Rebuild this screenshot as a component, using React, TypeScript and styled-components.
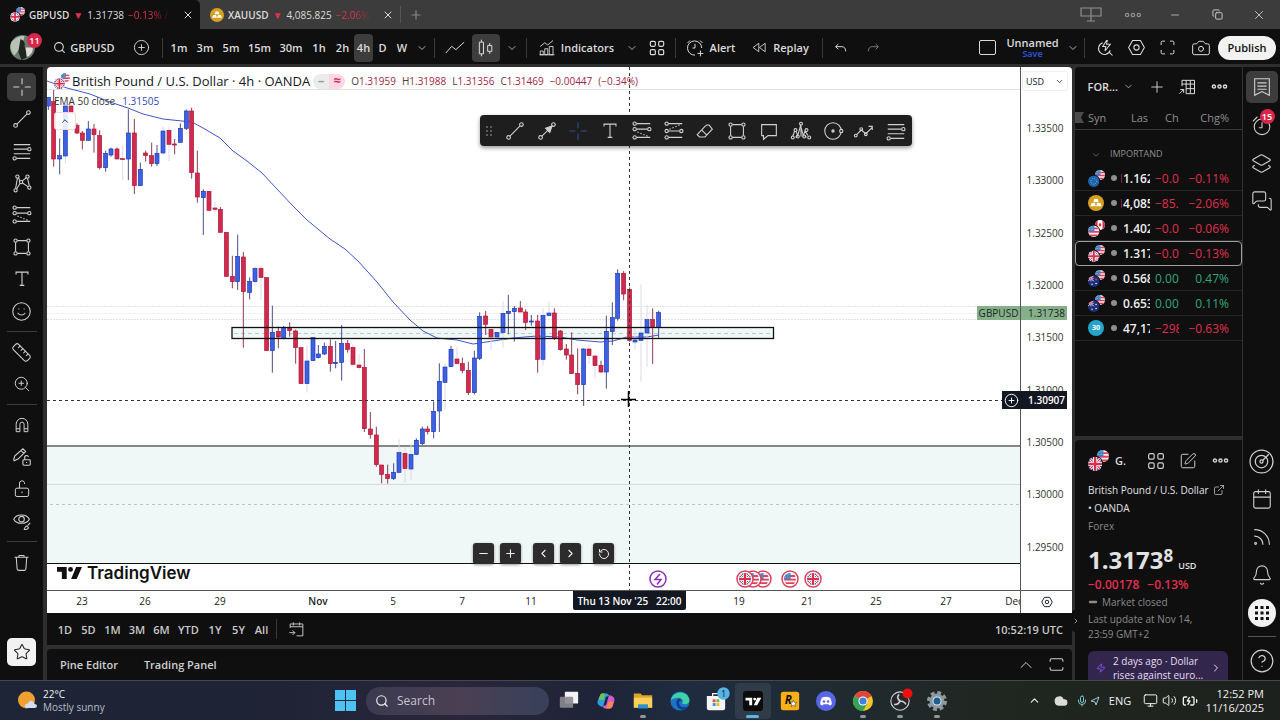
import React from "react";
import styled, { createGlobalStyle, css } from "styled-components";
import {
  Bell, Calendar, Camera, ChevronDown, ChevronLeft, ChevronRight, ChevronUp, CircleHelp, CirclePlus, Copy,
  ExternalLink, Layers2, Maximize, MessagesSquare, Minus, Plus, RotateCcw, Ruler, Search, Smile, SquarePen,
  Star, X, ZoomIn, Rss, Cloud, Volume2, BatteryCharging, Monitor, Mic, Zap,
} from "lucide-react";

const Global = createGlobalStyle`
  *, *::before, *::after { box-sizing: border-box; }
  body { margin: 0; background: #2e2e2e; color: #dbdbdb; font-family: "Open Sans", "Noto Sans", sans-serif; font-size: 11px; }
  button, input { font: inherit; color: inherit; }
  button { background: none; border: 0; padding: 0; margin: 0; display: inline-flex; align-items: center; justify-content: center; white-space: nowrap; }
  svg { display: block; flex: none; }
  a { color: inherit; text-decoration: none; }
`;

const RED = "#e0304e";
const PANEL = "#0f0f0f";

/* ---------- line icons ---------- */

const shapes = {
  cross: <path d="M12 2.500V9M12 15v6.500M2.500 12H9M15 12h6.500" />,
  trend: <><circle cx="5" cy="19" r="2" /><circle cx="19" cy="5" r="2" /><path d="M6.500 17.500 17.500 6.500" /></>,
  arrow: <><circle cx="5" cy="19" r="2" /><circle cx="19" cy="5" r="2" /><path d="M6.500 17.500 13 11" /><path d="m17.500 6.500-2.500 7-4.500-4.500z" fill="currentColor" /></>,
  fib: <><path d="M3 5h18M3 10h15M3 15h18M6 20h15" /><circle cx="20" cy="10" r="1.800" /><circle cx="4" cy="20" r="1.800" /></>,
  pattern: <><circle cx="5" cy="20" r="1.800" /><circle cx="7" cy="5" r="1.800" /><circle cx="11" cy="11" r="1.800" /><circle cx="18" cy="5" r="1.800" /><circle cx="20" cy="17" r="1.800" /><path d="M5 18 7 7M8 6l2 4M12 10l5-4M18 7l2 8M12.500 12l6 4M9.800 12.500 6 18.500" /></>,
  forecast: <><path d="M6 4h15M6 10h12M6 19h15" /><path d="m7 13 12 5" strokeDasharray="1.500 2" /><circle cx="4" cy="4" r="1.800" /><circle cx="4" cy="10" r="1.800" /><circle cx="20" cy="10" r="1.800" /><circle cx="4" cy="19" r="1.800" /></>,
  position: <><path d="M6 4h15M6 12h12M6 19h15" /><path d="m7 10 12-5" strokeDasharray="1.500 2" /><circle cx="4" cy="4" r="1.800" /><circle cx="4" cy="12" r="1.800" /><circle cx="20" cy="12" r="1.800" /><circle cx="4" cy="19" r="1.800" /></>,
  rect: <><path d="M7 5h10M7 19h10M5 7v10M19 7v10" /><circle cx="5" cy="5" r="1.800" /><circle cx="19" cy="5" r="1.800" /><circle cx="5" cy="19" r="1.800" /><circle cx="19" cy="19" r="1.800" /></>,
  text: <path d="M5.500 7V4.500h13V7M12 4.500V19M9.500 19h5" />,
  magnet: <path d="M5 20v-9a7 7 0 0 1 14 0v9h-4.500v-9a2.500 2.500 0 0 0-5 0v9zM5 16.500h4.500M14.500 16.500H19" />,
  pencilLock: <><path d="m3 15 1-4L13 3l3 3-8 8-4.500 2zM11 5l3 3" /><rect x="13" y="15" width="8" height="6" rx="1" /><path d="M15 15v-2a2 2 0 0 1 4-1M17 17.500v1" /></>,
  lock: <><rect x="4" y="11" width="16" height="10" rx="2" /><path d="M9 11V6a3 3 0 0 1 6-1.500V6M12 15v2" /></>,
  eye: <><path d="M3 10c3-6 14-6 17 0-3 6-14 6-17 0z" /><circle cx="11.500" cy="10" r="3" /><path d="M14 21c1 0 1-3 3-3.500L19 19c0 2-3 2.500-5 2zM18 17l3-3" /></>,
  trash: <path d="M4 6h16M9 6V4.500Q9 4 9.500 4h5q.5 0 .5.500V6M6 6l1 13.500q.100 1.500 1.500 1.500h7q1.400 0 1.500-1.500L18 6" />,
  eraser: <path d="m3.500 16 8.500-9 2-1.500h2.500L20 10l-8 8.500H6zM8.500 11l5.500 5.500" />,
  comment: <path d="M4 5h16v12h-9l-5 4v-4H4z" />,
  elliott: <><path d="m3 18 2-6M6.500 12l2 5 3-11 3 11 2-5 3 5M12 6v12M8 17l-2 2M16 17l2 2" /><circle cx="3" cy="19" r="1.600" /><circle cx="6" cy="11" r="1.600" /><circle cx="12" cy="4" r="1.600" /><circle cx="8.500" cy="18" r="1.600" /><circle cx="15.500" cy="18" r="1.600" /><circle cx="18" cy="11" r="1.600" /><circle cx="21" cy="19" r="1.600" /></>,
  circle: <><circle cx="12" cy="12" r="9" /><circle cx="12" cy="12" r="1.200" fill="currentColor" /><circle cx="21" cy="12" r="1.800" fill="#1e1e1e" /></>,
  path: <><path d="m4 16 5-5 5 4 7-7M17 7h4v4" /><circle cx="3" cy="17" r="1.500" /><circle cx="9" cy="10" r="1.500" /><circle cx="14" cy="15.500" r="1.500" /></>,
  lineChart: <path d="m1 18 7-8 5 4 10-9" />,
  candles: <path d="M4 5h5v14H4zM6.500 2v3M6.500 19v3M14 9h5v7h-5zM16.500 6v3M16.500 16v3" />,
  indicators: <path d="m3 10 6-5 4 3 7-6M3 21v-5h4v5zM9 21v-8h4v8zM15 21V10h5v11zM2 21h20" />,
  grid: <><rect x="4" y="4" width="6" height="6" rx="1.500" /><rect x="14" y="4" width="6" height="6" rx="1.500" /><rect x="4" y="14" width="6" height="6" rx="1.500" /><rect x="14" y="14" width="6" height="6" rx="1.500" /></>,
  alarm: <><path d="M20 12a8.500 8.500 0 1 0-8 8.500M12 7v5H9M3 6l3-3M18 3l3 3M18.500 15v7M15 18.500h7" /></>,
  clock: <><circle cx="12" cy="14" r="8.500" /><path d="M12 9v6H8.500M2 8l5-5" /></>,
  replay: <path d="M11 6v12l-8-6zM20 6v12l-8-6z" />,
  undo: <path d="m8 6-4 4 4 4M4 10h9q6 0 6 7" />,
  redo: <path d="m16 6 4 4-4 4M20 10h-9q-6 0-6 7" />,
  hex: <><path d="M7.500 4h9l4.500 8-4.500 8h-9L3 12z" /><circle cx="12" cy="12" r="3" /></>,
  quick: <><path d="M9 5a8 8 0 1 0 10 10M17.500 17.500 22 22M14 2l-5 8h4l-1 6 7-9h-5l1-5z" /></>,
  dots: <><circle cx="5" cy="12" r="2" /><circle cx="12" cy="12" r="2" /><circle cx="19" cy="12" r="2" /></>,
  layout: <path d="M2 5h20v8H2zM12 5v13M8 18h8" />,
  table: <path d="M6 11V4h15v16H11M6 8.500h15M11 4v16M16 4v16M11 14h10M3 20l5-5M4 15h4v4" />,
  bookmark: <path d="M4 3h16v18l-8-4-8 4zM7 7.500h10M7 11h10M7 14.500h10" />,
  radar: <><circle cx="12" cy="12" r="11" /><circle cx="12" cy="12" r="6" /><circle cx="12" cy="12" r="1.500" /><path d="m13 11 6-6" /></>,
  goto: <path d="M4 10V5h16v15h-8M4 8.500h16M8 3v4M16 3v4M3 16h7M7 13l3 3-3 3" />,
  expand: <path d="M3 8V6q0-2 2-2h14q2 0 2 2v2M3 16v2q0 2 2 2h14q2 0 2-2v-2" />,
};

const Icon = ({ name, size = 22, w = 1.2 }: { name: keyof typeof shapes; size?: number; w?: number }) => (
  <svg width={size} height={size} viewBox="0 0 24 24" fill="none" stroke="currentColor" strokeWidth={w} aria-hidden>
    {shapes[name]}
  </svg>
);

/* ---------- flags ---------- */

type FlagKind = "gb" | "us" | "eu" | "ca" | "nz" | "au";

const FlagArt = ({ kind }: { kind: FlagKind }) => {
  if (kind === "us")
    return <><rect width="20" height="20" fill="#f3f1f4" /><path d="M0 5h20M0 11h20M0 17h20" stroke="#df4258" strokeWidth="3" /><path d="M0 0h11v10H0z" fill="#3b84c9" /><path d="M2 3h7M2 7h7" stroke="#fff" strokeDasharray="1 2" /></>;
  if (kind === "eu")
    return <><rect width="20" height="20" fill="#1b64b0" /><circle cx="10" cy="10" r="5" fill="none" stroke="#c9cf78" strokeWidth="1.500" strokeDasharray="1.500 2.400" /></>;
  if (kind === "ca")
    return <><rect width="20" height="20" fill="#fff" /><path d="M0 0h5v20H0zM15 0h5v20h-5zM10 5l3 5-3 4-3-4z" fill="#d8273f" /></>;
  if (kind === "gb")
    return <><rect width="20" height="20" fill="#31428e" /><path d="m0 0 20 20M20 0 0 20" stroke="#fff" strokeWidth="4" /><path d="m0 0 20 20M20 0 0 20" stroke="#d8304a" strokeWidth="1.500" /><path d="M10 0v20M0 10h20" stroke="#fff" strokeWidth="6" /><path d="M10 0v20M0 10h20" stroke="#d8304a" strokeWidth="3.500" /></>;
  return <><rect width="20" height="20" fill="#1d2f7c" /><path d="m0 0 10 10M10 0 0 10M0 5h10M5 0v10" stroke="#fff" strokeWidth="1.500" /><path d="M5 0v10M0 5h10" stroke="#d8304a" /><circle cx="14" cy="7" r="1.300" fill={kind === "nz" ? "#e35a66" : "#fff"} /><circle cx="14" cy="14" r="1.300" fill="#fff" /><circle cx="7" cy="15" r="1.300" fill="#fff" /></>;
};

const Pair = ({ front, back, size = 17, ring = PANEL }: { front: FlagKind; back: FlagKind; size?: number; ring?: string }) => {
  const id = React.useId();
  return (
    <svg width={size} height={size} viewBox="0 0 34 34" aria-hidden>
      <clipPath id={id}><circle cx="10" cy="10" r="10" /></clipPath>
      <g transform="translate(14 0)"><g clipPath={`url(#${id})`}><FlagArt kind={back} /></g></g>
      <circle cx="11.500" cy="22.500" r="13" fill={ring} />
      <g transform="translate(0 11) scale(1.150)"><g clipPath={`url(#${id})`}><FlagArt kind={front} /></g></g>
    </svg>
  );
};

const Gold = ({ size = 16 }: { size?: number }) => (
  <svg width={size} height={size} viewBox="0 0 20 20" aria-hidden>
    <circle cx="10" cy="10" r="10" fill="#d5a021" />
    <path d="M8 5h4l1.500 4h-7zM4.500 10h4L10 14H3zM11.500 10h4l1.500 4h-7z" fill="#fff" />
  </svg>
);

const Dow = () => (
  <svg width="16" height="16" viewBox="0 0 20 20" aria-hidden>
    <circle cx="10" cy="10" r="10" fill="#25a5cb" />
    <text x="10" y="13" fontSize="9" fontWeight="700" textAnchor="middle" fill="#fff">30</text>
  </svg>
);

/* ---------- title bar ---------- */

const Page = styled.div`display: flex; flex-direction: column; min-height: 100vh;`;

const TitleBar = styled.header`display: flex; height: 29px; background: #3c3c3c; align-items: stretch;`;

const Tab = styled.div<{ $active?: boolean; $w: number }>`
  display: flex; align-items: center; gap: 4px; width: ${(p) => p.$w}px; padding-left: 10px; font-size: 10px;
  ${(p) => p.$active && css`background: ${PANEL}; border-radius: 0 5px 0 0;`}
  button { margin-left: auto; width: 24px; }
`;
const Strong = styled.span`font-weight: 600;`;
const Down = styled.span`color: ${RED};`;
const Fade = styled.span`
  color: ${RED}; white-space: nowrap; overflow: hidden; flex: 1;
  mask-image: linear-gradient(90deg, #000 50%, transparent);
`;
const NewTab = styled.button`&& { width: 30px; color: #8a8a8a; border-left: 1px solid #555; margin: 6px 0; }`;
const Spacer = styled.div`flex: 1;`;
const WindowButtons = styled.div`
  display: flex;
  button { width: 42px; color: #d0d0d0; }
  button.dim { color: #8f8f8f; }
`;

/* ---------- top toolbar ---------- */

const Toolbar = styled.div`display: flex; align-items: center; height: 35px; background: ${PANEL}; padding: 2px 4px 0 0;`;
const Slot = styled.button<{ $w: number; $on?: boolean; $dim?: boolean }>`
  width: ${(p) => p.$w}px; height: 28px; gap: 5px; font-weight: 600; font-size: 11px; border-radius: 4px;
  ${(p) => p.$on && css`background: #3d3d3d;`}
  ${(p) => p.$dim && css`color: #777;`}
`;
const SymbolSearch = styled(Slot)`gap: 4px;`;
const Divider = styled.i`width: 1px; height: 20px; background: #3a3a3a; margin: 0 3px;`;
const Avatar = styled.button`position: relative; width: 45px; height: 30px;`;
const Badge = styled.span`
  position: absolute; top: 0; right: 3px; min-width: 15px; height: 15px; line-height: 15px; border-radius: 8px;
  background: #d9254a; color: #fff; font-size: 9px; font-weight: 600; text-align: center;
`;
const Named = styled.button`&& { flex-direction: column; width: 63px; font-weight: 600; font-size: 11px; line-height: 12px; } small { color: #2f55e0; font-size: 9px; line-height: 9px; font-weight: 600; }`;
const Publish = styled.button`height: 24px; width: 58px; border-radius: 12px; background: #f2f2f2; color: #111; font-size: 11px; font-weight: 600;`;

/* ---------- body ---------- */

const Body = styled.div`display: flex; flex: 1; margin-top: 3px; min-height: 613px;`;
const LeftRail = styled.nav`
  display: flex; flex-direction: column; align-items: center; width: 43px; margin-right: 4px; background: ${PANEL}; padding: 4px 0 14px;
  hr { width: 30px; height: 1px; margin: 4px 0; border: 0; background: #3d3d3d; }
`;
const RailTool = styled.button<{ $on?: boolean; $light?: boolean }>`
  width: 29px; height: 28px; margin: 2px 0; border-radius: 5px; color: #cfcfcf;
  ${(p) => p.$on && css`background: #3d3d3d;`}
  ${(p) => p.$light && css`background: #f2f2f2; color: #222; margin: auto 0 0;`}
`;
const Centre = styled.main`display: flex; flex-direction: column; flex: 1; min-width: 0; gap: 4px; margin-right: 3px;`;
const ChartCard = styled.section`display: flex; flex-direction: column; flex: 1; border-radius: 4px 4px 0 0; overflow: hidden; background: #fff; color: #131722;`;
const PlotRow = styled.div`display: flex; flex: 1; border-bottom: 1px solid #555;`;
const Plot = styled.div`position: relative; flex: 1; overflow: hidden; > svg { width: 100%; height: 100%; position: absolute; inset: 0; }`;
const PriceAxis = styled.div`position: relative; width: 52px; border-left: 1px solid #555; > svg { width: 100%; height: 100%; }`;
const Currency = styled.button`
  && { position: absolute; top: 4px; left: 1px; width: 46px; height: 20px; border: 1px solid #eee; border-radius: 3px; justify-content: space-between; padding: 0 3px; font-size: 9px; }
`;
const TimeRow = styled.div`display: flex; height: 22px;`;
const TimeScale = styled.div`position: relative; flex: 1; overflow: hidden; > svg { width: 100%; height: 100%; }`;
const TimeSettings = styled.button`&& { width: 52px; border-left: 1px solid #555; }`;
const CursorTime = styled.div`
  position: absolute; left: 526px; top: -1px; height: 20px; width: 113px; background: #131722; color: #fff;
  font-size: 10px; font-weight: 600; line-height: 23px; text-align: center; white-space: pre; border-radius: 0 0 2px 2px;
`;
const CursorPrice = styled.div`
  position: absolute; right: 5px; top: 324px; display: flex; align-items: center; gap: 9px; width: 65px; height: 18px; background: #131722;
  color: #fff; font-size: 10px; font-weight: 600; padding-left: 2px; z-index: 2;
`;
const LastPrice = styled.div`
  position: absolute; right: 5px; top: 239px; display: grid; grid-template-columns: 43px 1fr; width: 90px; height: 14px; line-height: 14px;
  background: #86b08a; color: #1b2a1e; font-size: 10px; text-align: center;
  span + span { border-left: 1px solid #555; padding-left: 5px; }
`;
const Legend = styled.div`position: absolute; top: 5px; left: 7px; display: flex; align-items: center; font-size: 13px; white-space: pre;`;
const LegendTitle = styled.span`margin: 0 3px 0 2px;`;
const Pill = styled.span`
  display: inline-flex; width: 32px; height: 15px; border-radius: 8px; overflow: hidden; margin-right: 6px; font-size: 13px; line-height: 13px;
  i { flex: 1; text-align: center; font-style: normal; background: #ebebeb; color: #999; font-weight: 700; }
  i + i { background: #fbd7e4; color: #d42b62; }
`;
const Ohlc = styled.span`font-size: 10px; color: #444; display: inline-flex; gap: 6px; b { font-weight: 400; color: #a01f45; }`;
const Study = styled.div`position: absolute; top: 27px; left: 7px; font-size: 10px; color: #333; display: flex; gap: 7px; b { font-weight: 400; color: #3349b8; }`;
const Collapse = styled.button`&& { position: absolute; top: 45px; left: 7px; width: 22px; height: 18px; background: #ffffffe0; border: 1px solid #f0dada; border-radius: 3px; }`;
const Floating = styled.div`
  position: absolute; top: 48px; left: 433px; display: flex; align-items: center; height: 31px; width: 432px; padding-left: 5px;
  background: #1e1e1e; color: #d0d0d0; border-radius: 4px; box-shadow: 0 2px 4px #0006;
  button { flex: 1; height: 28px; }
  button.on { color: #2f4f9f; }
`;
const Grip = styled.i`width: 8px; height: 12px; margin-right: 6px; background: radial-gradient(circle at 2px 2px, #5c5c5c 1px, transparent 1px) 0 0 / 4px 4px;`;
const NavButtons = styled.div`
  position: absolute; bottom: 26px; left: 426px; display: flex; gap: 6px; color: #eee;
  button { width: 21px; height: 21px; background: #2c2c2c; border-radius: 3px; box-shadow: 0 1px 3px #0006; }
  button:nth-child(3), button:nth-child(5) { margin-left: 6px; }
`;
const Brand = styled.a`position: absolute; left: 10px; bottom: 5px; display: flex; align-items: center; gap: 5px; color: #111; font: 600 17px/24px Inter, sans-serif;`;

const RangeBar = styled.div`
  display: flex; align-items: center; height: 32px; background: ${PANEL}; margin-top: -4px; padding: 0 9px 0 6px; color: #c9c9c9; font-weight: 600; font-size: 11px;
`;
const Range = styled.button<{ $w: number }>`width: ${(p) => p.$w}px; height: 26px;`;
const DockBar = styled.div`
  display: flex; align-items: center; height: 31px; background: ${PANEL}; border-radius: 4px 4px 0 0; padding: 0 1px 0 0; font-size: 11px; font-weight: 600; color: #d0d0d0;
`;
const DockTab = styled.button`&& { padding: 0 13px; }`;
const DockButton = styled.button`width: 30px; height: 28px;`;

/* ---------- right side ---------- */

const Side = styled.aside`display: flex; flex-direction: column; width: 168px; border-right: 1px solid #333; gap: 4px;`;
const Watch = styled.section`flex: 1; background: ${PANEL}; border-radius: 4px 0 0 0; overflow: hidden;`;
const SideHead = styled.div`display: flex; align-items: center; height: 39px; padding-left: 12px;`;
const Table = styled.table`
  width: 100%; table-layout: fixed; border-spacing: 0; font-size: 12px;
  th { height: 24px; padding: 0; font-weight: 400; font-size: 11px; color: #8e8e8e; text-align: left; border-bottom: 1px solid #3a3a3a; }
  td { height: 25px; padding: 0; border-bottom: 1px solid #262626; }
  th:last-child, td:last-child { text-align: right; padding-right: 13px; }
`;
const SymHead = styled.div`
  display: flex; align-items: center; gap: 4px; overflow: hidden;
`;
const GroupCell = styled.td`&&& { height: 36px; padding: 11px 0 0 16px; text-align: left; border: 0; color: #8e8e8e; font-size: 9px; } svg { display: inline; vertical-align: middle; margin-right: 9px; }`;
const Row = styled.tr<{ $on?: boolean }>`${(p) => p.$on && css`outline: 1px solid #a0a0a0; outline-offset: -1px; border-radius: 4px;`}`;
const Sym = styled.div`
  display: flex; align-items: center; justify-content: space-between; padding: 0 3px 0 13px;
  &::after { content: ""; width: 6px; height: 6px; border-radius: 3px; background: #8e8e8e; }
`;
const Clip = styled.div<{ $w: number; $x?: number }>`width: ${(p) => p.$w}px; margin-left: ${(p) => p.$x ?? 0}px; overflow: hidden; white-space: nowrap;`;
const Last = styled(Clip)<{ $tick?: boolean }>`
  font-weight: 600; color: #eee;
  ${(p) => p.$tick && css`background: linear-gradient(#7d2637, #7d2637) 0 50% / 1px 9px no-repeat;`}
  padding-left: 2px;
`;
const Move = styled.span<{ $up?: boolean }>`color: ${(p) => (p.$up ? "#2fa87c" : RED)};`;

const Details = styled.section`flex: 0 0 240px; height: 240px; background: ${PANEL}; overflow: hidden; padding-left: 13px; border-radius: 4px 0 0 0;`;
const DetailHead = styled.div`
  display: flex; align-items: center; height: 41px; font-weight: 600; padding-right: 6px;
  b { margin-left: 6px; font-weight: 600; }
  button { width: 32px; color: #cfcfcf; }
  button:first-of-type { margin-left: auto; }
`;
const Line = styled.p<{ $dim?: boolean; $h?: number }>`
  display: flex; align-items: center; gap: 4px; margin: 0; height: ${(p) => p.$h ?? 18}px; font-size: 10px; white-space: nowrap;
  ${(p) => (p.$dim ? css`color: #8a8a8a;` : css`color: #e2e2e2; font-weight: 500;`)}
`;
const Price = styled.div`
  display: flex; align-items: baseline; height: 32px; margin-top: 9px; font-size: 24px; line-height: 32px; font-weight: 700; color: #e2e2e2;
  sup { font-size: 17px; line-height: 1; align-self: flex-start; margin-top: 3px; }
  small { font-size: 9px; margin-left: 5px; font-weight: 600; }
`;
const Change = styled.div`height: 17px; line-height: 17px; font-size: 12px; font-weight: 600; color: ${RED}; display: flex; gap: 8px;`;
const News = styled.a`
  display: flex; align-items: center; gap: 7px; width: 140px; margin-top: 10px; padding: 3px 8px; background: #33264d; border-radius: 6px 6px 0 0; color: #e4dff0; font-size: 10px; line-height: 14px;
  span { flex: 1; white-space: nowrap; font-weight: 500; }
`;

const IconRail = styled.nav`
  position: relative; display: flex; flex-direction: column; align-items: center; width: 37px; background: ${PANEL}; padding: 4px 0 3px; color: #cfcfcf;
  hr { width: 28px; height: 1px; border: 0; margin: 5px 0 8px; background: #555; }
`;
const RailButton = styled.button<{ $on?: boolean }>`
  && { position: relative; width: 32px; height: 32px; margin-bottom: 6px; border-radius: 5px; }
  &&:last-child { margin-bottom: 0; }
  ${(p) => p.$on && css`background: #3d3d3d;`}
`;
const AppsButton = styled.button`&& { width: 28px; height: 28px; margin: 2px 0 4px; border-radius: 14px; background: #f2f2f2; color: #111; }`;
const SideHandle = styled.button`&& { position: absolute; left: -171px; top: 543px; width: 7px; height: 22px; background: ${PANEL}; border-radius: 3px; }`;

/* ---------- taskbar ---------- */

const Taskbar = styled.footer`
  display: flex; align-items: center; height: 40px; border-top: 1px solid #45484c; color: #f0f0f0;
  background: linear-gradient(90deg, #1e2536 0, #1e2335 20%, #2a263b 36%, #1e2437 47%, #1f2c40 54%, #202b30 66%, #202620 78%, #1d211d 100%);
`;
const Weather = styled.div`display: flex; align-items: center; gap: 5px; width: 335px; padding-left: 17px; font-size: 10px; line-height: 13px; small { display: block; font-size: 10px; color: #b8bdc9; }`;
const SearchBox = styled.label`
  display: flex; align-items: center; gap: 8px; width: 183px; height: 28px; margin-left: 10px; padding: 0 9px; border-radius: 14px; background: linear-gradient(90deg, #3b3a50, #4a3f52 50%, #38405a);
  input { width: 120px; border: 0; background: none; outline: 0; font-size: 12px; padding: 0; }
  input::placeholder { color: #c5c5cf; opacity: 1; }
`;
const Apps = styled.div`display: grid; grid-template-columns: repeat(11, 1fr); width: 404px; margin-left: 2px;`;
const AppButton = styled.button<{ $run?: boolean; $on?: boolean }>`
  position: relative; height: 36px; border-radius: 4px;
  ${(p) => p.$on && css`background: #ffffff14;`}
  ${(p) => (p.$run || p.$on) && css`&::after { content: ""; position: absolute; bottom: 1px; width: ${p.$on ? 13 : 6}px; height: 3px; border-radius: 2px; background: ${p.$on ? "#5fb4e6" : "#92969c"}; }`}
`;
const Tray = styled.div`display: flex; align-items: center; margin-left: auto; padding-right: 16px; font-size: 11px;`;
const TraySlot = styled.button<{ $w: number }>`&& { width: ${(p) => p.$w}px; height: 30px; justify-content: space-evenly; }`;
const Clock = styled.time`width: 62px; text-align: right; line-height: 14px; font-size: 11px; white-space: nowrap;`;

/* ---------- chart data ---------- */

/* Bars: x, body top, body bottom, high, low, then "b" (up) or "r" (down); "f" marks a faint wick. Three units per pixel. */
type Bar = [number, number, number, number, number, string];
const segments: { x: number; y: number; bars: Bar[] }[] = [
  {
    x: 0, y: 60,
    bars: [
      [145, 112, 138, 112, 150, "b"], [161, 125, 297, 90, 320, "r"], [179, 287, 297, 235, 343, "b"], [196, 138, 288, 130, 310, "bf"],
      [213, 138, 160, 120, 200, "rf"], [231, 197, 219, 190, 222, "r"], [247, 219, 241, 213, 268, "r"], [265, 207, 241, 183, 241, "b"],
      [282, 207, 224, 192, 278, "r"], [299, 227, 323, 211, 328, "r"], [317, 280, 323, 272, 335, "b"], [333, 267, 285, 263, 290, "b"],
      [351, 267, 297, 263, 297, "r"], [368, 296, 298, 255, 360, "rf"], [385, 219, 297, 148, 360, "b"], [403, 219, 377, 177, 402, "r"],
      [421, 328, 377, 308, 377, "b"], [437, 279, 287, 272, 305, "r"], [455, 287, 311, 248, 320, "r"], [471, 280, 311, 255, 318, "b"],
      [489, 213, 279, 200, 285, "bf"], [507, 211, 253, 200, 303, "rf"], [524, 252, 255, 237, 283, "r"], [541, 205, 247, 190, 247, "b"],
      [559, 153, 205, 149, 210, "b"], [575, 153, 338, 143, 356, "r"], [592, 339, 411, 272, 428, "r"], [610, 394, 413, 388, 525, "b"],
      [627, 394, 451, 394, 451, "r"], [645, 444, 448, 425, 460, "rf"], [661, 448, 517, 441, 517, "r"], [679, 517, 649, 517, 649, "r"],
      [697, 649, 665, 587, 685, "r"], [713, 589, 665, 524, 690, "b"], [730, 591, 695, 576, 863, "r"], [749, 664, 697, 652, 718, "b"],
      [765, 625, 665, 618, 678, "bf"], [783, 625, 653, 618, 720, "rf"], [800, 653, 872, 653, 872, "r"],
    ],
  },
  {
    x: 230, y: 260,
    bars: [
      [127, 217, 272, 137, 338, "b"], [145, 214, 231, 200, 265, "r"], [161, 203, 235, 198, 238, "b"], [179, 204, 212, 187, 230, "r"],
      [197, 213, 263, 209, 311, "r"], [213, 263, 371, 263, 371, "r"], [231, 303, 371, 255, 398, "bf"], [249, 233, 302, 233, 302, "b"],
      [265, 282, 293, 255, 295, "b"], [283, 259, 282, 248, 285, "b"], [301, 259, 311, 238, 335, "r"], [317, 307, 311, 243, 325, "b"],
      [335, 250, 307, 195, 362, "b"], [353, 250, 268, 240, 278, "r"], [369, 262, 313, 253, 320, "rf"], [387, 315, 323, 282, 330, "rf"],
      [403, 322, 506, 267, 516, "r"], [421, 507, 524, 456, 536, "r"], [439, 525, 614, 500, 620, "r"], [455, 615, 643, 615, 670, "r"],
      [473, 643, 656, 614, 671, "r"], [491, 637, 656, 610, 660, "b"], [507, 578, 637, 538, 640, "bf"], [525, 580, 626, 560, 668, "rf"],
      [543, 583, 627, 550, 660, "bf"], [559, 541, 583, 535, 585, "b"], [577, 507, 551, 500, 555, "b"], [593, 507, 515, 498, 523, "r"],
      [611, 454, 515, 424, 535, "b"], [628, 364, 453, 310, 516, "b"], [645, 321, 367, 312, 450, "bf"], [663, 268, 320, 258, 320, "b"],
      [681, 297, 311, 260, 311, "rf"], [697, 311, 331, 293, 340, "r"], [715, 331, 398, 305, 405, "r"], [733, 294, 398, 272, 403, "b"],
      [749, 169, 295, 157, 300, "b"], [767, 168, 193, 153, 225, "r"], [783, 208, 231, 200, 270, "rf"], [801, 217, 231, 217, 231, "b"],
      [819, 160, 218, 125, 263, "bf"],
    ],
  },
  {
    x: 460, y: 250,
    bars: [
      [145, 184, 191, 135, 253, "b"], [163, 175, 185, 168, 275, "b"], [181, 174, 186, 153, 186, "r"], [197, 186, 217, 178, 240, "r"],
      [214, 213, 216, 195, 227, "b"], [233, 213, 328, 195, 368, "r"], [249, 196, 328, 175, 348, "bf"], [267, 189, 197, 155, 200, "bf"],
      [283, 189, 266, 175, 270, "r"], [301, 243, 299, 240, 302, "r"], [319, 297, 315, 282, 329, "r"], [335, 315, 371, 247, 371, "r"],
      [353, 370, 404, 295, 433, "r"], [371, 297, 404, 295, 468, "b"], [387, 297, 317, 285, 342, "rf"], [405, 318, 347, 318, 385, "rf"],
      [423, 346, 366, 332, 368, "r"], [439, 244, 366, 197, 416, "b"], [457, 203, 245, 157, 285, "b"], [473, 70, 205, 58, 212, "b"],
      [491, 70, 132, 63, 151, "r"], [509, 118, 271, 112, 275, "r"], [525, 270, 276, 235, 298, "bf"], [543, 249, 271, 103, 395, "bf"],
      [561, 209, 249, 165, 350, "bf"], [578, 209, 232, 175, 342, "r"], [596, 188, 232, 182, 265, "b"],
    ],
  },
];

const ema = "47,81 67,88 90,94 110,102 128,108 143,114 163,119 182,121 192,122 203,128 220,138 233,151 247,161 262,173 277,189 293,206 307,220 330,239 345,249 358,261 377,282 393,302 410,320 423,331 437,338 457,340 473,344 493,341 513,338 537,336 560,337 577,340 600,342 613,341 627,337 647,337 659,335";

const prices = ["1.33500", "1.33000", "1.32500", "1.32000", "1.31500", "1.31000", "1.30500", "1.30000", "1.29500"];
const dates: [number, string][] = [[35, "23"], [98, "26"], [173, "29"], [271, "Nov"], [346, "5"], [415, "7"], [484, "11"], [692, "19"], [760, "21"], [829, "25"], [899, "27"], [967, "Dec"]];
const events: [number, FlagKind][] = [[763, "us"], [753, "us"], [745, "gb"], [790, "us"], [813, "gb"]];

const Chart = () => (
  <svg aria-label="GBPUSD 4h candles">
    <g transform="translate(-47 -67)" shapeRendering="crispEdges">
      <rect x="47" y="446" width="100%" height="117" fill="#eff8f6" />
      <g stroke="#e2e2e4">
        <path d="M47 89.500h4000" /><path d="M47 306.500h4000M47 319.500h4000" strokeDasharray="2 1" />
        <path d="M47 313.500h4000" stroke="#f1f1f3" /><path d="M47 484.500h4000" stroke="#d3dbda" />
      </g>
      <path d="M50 504.500h4000" stroke="#bcc5c3" strokeDasharray="3 3" />
      <path d="M47 446h4000" stroke="#858787" strokeWidth="2" />
      <path d="M47 563.500h4000" stroke="#111" />
      <rect x="232" y="327.500" width="541" height="11" fill="#eff8f6" />
      <path d="M234 333.500h538" stroke="#b9cdc9" strokeDasharray="4 3" />
    </g>
    <g transform="translate(-47 -67)">
      <polyline points={ema} fill="none" stroke="#4056c4" />
      {segments.map((s) => (
        <g key={s.x} transform={`translate(${s.x} ${s.y}) scale(0.33333)`}>
          {s.bars.map(([x, top, bottom, high, low, kind]) => {
            const up = kind[0] === "b";
            const wick = kind[1] === "f" ? "#dcd9e4" : up ? "#4a4c8c" : "#8e3a55";
            return (
              <g key={x}>
                <path d={`M${x} ${high}V${low}`} stroke={wick} strokeWidth="3" />
                <rect x={x - 6} y={top} width="12" height={Math.max(3, bottom - top)} fill={up ? "#3c62e2" : "#d22a4c"} stroke={up ? "#2036b4" : "#a81a3c"} strokeWidth="2" />
              </g>
            );
          })}
        </g>
      ))}
      <rect x="232" y="327.500" width="541.500" height="11" fill="none" stroke="#111" strokeWidth="1.300" />
      <g stroke="#333" strokeDasharray="3 3" shapeRendering="crispEdges">
        <path d="M47 400.500h4000" /><path d="M629.500 67V590" />
      </g>
      <path d="M621 399.500h15M628.500 391v16" stroke="#000" strokeWidth="1.500" />
      <circle cx="658" cy="579" r="8" fill="#fff" stroke="#8a2fb0" strokeWidth="1.500" />
      <path d="m660 574-5 5.500h6l-4 5" fill="none" stroke="#8a2fb0" strokeWidth="1.500" />
      <clipPath id="event"><circle cx="10" cy="10" r="10" /></clipPath>
      {events.map(([x, kind]) => (
        <g key={x}>
          <circle cx={x} cy="579" r="8" fill="#fff" stroke="#d8405c" strokeWidth="1.500" />
          <g transform={`translate(${x - 6} 573) scale(0.600)`}><g clipPath="url(#event)"><FlagArt kind={kind} /></g></g>
        </g>
      ))}
    </g>
  </svg>
);

const intervals: [string, number][] = [["1m", 26], ["3m", 26], ["5m", 26], ["15m", 31], ["30m", 32], ["1h", 24], ["2h", 23]];
const leftTools: (keyof typeof shapes)[] = ["trend", "fib", "pattern", "forecast", "rect", "text"];
const floatingTools: (keyof typeof shapes)[] = ["trend", "arrow", "cross", "text", "forecast", "position", "eraser", "rect", "comment", "elliott", "circle", "path", "fib"];
const ranges: [string, number][] = [["1D", 24], ["5D", 23], ["1M", 25], ["3M", 24], ["6M", 25], ["YTD", 29], ["1Y", 24], ["5Y", 23], ["All", 23]];

const watch: { icon: React.ReactNode; last: string; ch: string; pct: string; up?: boolean; on?: boolean; tick?: boolean }[] = [
  { icon: <Pair front="eu" back="us" />, last: "1.162", ch: "−0.00", pct: "−0.11%", tick: true },
  { icon: <Gold />, last: "4,085", ch: "−85.1", pct: "−2.06%", tick: true },
  { icon: <Pair front="us" back="ca" />, last: "1.402", ch: "−0.00", pct: "−0.06%" },
  { icon: <Pair front="gb" back="us" />, last: "1.317", ch: "−0.00", pct: "−0.13%", on: true },
  { icon: <Pair front="nz" back="us" />, last: "0.568", ch: "0.001", pct: "0.47%", up: true },
  { icon: <Pair front="au" back="us" />, last: "0.653", ch: "0.00", pct: "0.11%", up: true },
  { icon: <Dow />, last: "47,17", ch: "−298", pct: "−0.63%" },
];

const TvMark = ({ width, color }: { width: number; color: string }) => (
  <svg width={width} viewBox="0 0 36 18" fill={color} aria-hidden><path d="M0 0h14v18H7V7H0zM28 18h-8L27.500 0H36z" /><circle cx="19.500" cy="3.500" r="3.500" /></svg>
);

/* ---------- taskbar app art ---------- */

const art: { name: string; run?: boolean; on?: boolean; svg: React.ReactNode }[] = [
  { name: "Task view", svg: <><rect x="7" y="1" width="16" height="14" rx="1" fill="#f2f2f2" /><rect x="1" y="7" width="16" height="13" rx="1" fill="#8b8b8f" opacity=".9" /></> },
  { name: "Copilot", svg: <><path d="M7 3h6q2 0 3 3l-4 1-3 10q-1 3-4 1-4-2-3-6L5 5q.500-2 2-2z" fill="#2b9fe0" /><path d="M3 10 5 5q.500-2 2-2h4L9 11z" fill="#6cc45a" /><path d="M17 21h-6q-2 0-3-3l4-1 3-10q1-3 4-1 4 2 3 6l-2 7q-1 2-3 2z" fill="#d45ad0" /><path d="M21 13 19 19q-1 2-2 2h-5l3-8z" fill="#f58a4b" /></> },
  { name: "Files", run: true, svg: <><path d="M1 3h8l2 2h12v15H1z" fill="#e0a526" /><path d="M1 8h22v12H1z" fill="#fbd05a" /><path d="M6 16h12v5H6z" fill="#2b8fd0" /></> },
  { name: "Edge", svg: <><circle cx="12" cy="12" r="11.500" fill="#1b74c8" /><path d="M1 11C3 0 20-2 23.300 10c.5 6-5 7-9 5 3-3 0-7-4-7-4 0-8 1-9.300 3z" fill="#3fd0a8" /><path d="M10 9c-4 3-3 11 3 13 3 1 6 0 8-3-6 2-10-1-10-5 0-2 0-2 3-2-1-2-2-3-4-3z" fill="#103f8a" /></> },
  { name: "Store", svg: <><path d="M1 6h22v14q0 3-3 3H4q-3 0-3-3z" fill="#f4f4f4" /><path d="M8 6V3h8v3" fill="none" stroke="#f4f4f4" strokeWidth="1.500" /><path d="M8 10h3.500v3.500H8z" fill="#e8502f" /><path d="M12.500 10H16v3.500h-3.500z" fill="#7cb52b" /><path d="M8 14.500h3.500V18H8z" fill="#2a9fe0" /><path d="M12.500 14.500H16V18h-3.500z" fill="#f3b71e" /><circle cx="21" cy="3" r="7.500" fill="#55b4e4" /><text x="21" y="7" fontSize="11" textAnchor="middle" fill="#123">1</text></> },
  { name: "TradingView", on: true, svg: <><rect width="24" height="24" rx="4" fill="#0c0c0c" /><path d="M3 8h8v9H7.500v-5.500H3zM17 17h-4l4-9h5z" fill="#fff" /><circle cx="14" cy="9.700" r="1.700" fill="#fff" /></> },
  { name: "Rockstar", svg: <><rect x="1" y="1" width="22" height="22" rx="3" fill="#fcb017" /><text x="10" y="15" fontSize="14" fontWeight="700" fontStyle="italic" textAnchor="middle" fill="#111">R</text><path d="m16 11 1 2.500 3 .2-2 2 .5 3-2.500-1.500-2.500 1.500.5-3-2-2 3-.2z" fill="#fff" stroke="#222" strokeWidth=".6" /></> },
  { name: "Discord", svg: <><circle cx="12" cy="12" r="12" fill="#5865e8" /><path d="M7 8q5-2 10 0 2 4 2 8-1 1-3 1.500l-1-1.500H9l-1 1.500Q6 17 5 16q0-4 2-8z" fill="#fff" /><circle cx="9.500" cy="12.500" r="1.500" fill="#5865e8" /><circle cx="14.500" cy="12.500" r="1.500" fill="#5865e8" /></> },
  { name: "Chrome", run: true, svg: <><circle cx="12" cy="12" r="12" fill="#f5c52c" /><path d="M12 12 1.600 6a12 12 0 0 1 20.800 0z" fill="#e0453a" /><path d="M12 12 1.600 6A12 12 0 0 0 12 24l5-9z" fill="#35a257" /><circle cx="12" cy="12" r="5.500" fill="#fff" /><circle cx="12" cy="12" r="4.300" fill="#3f7fe6" /></> },
  { name: "OBS", run: true, svg: <><circle cx="12" cy="12" r="11" fill="#25272a" stroke="#d0d0d0" strokeWidth="1.300" /><path d="M11 4q-4 4 1 8M12 12q5 0 7 4M12 12q-2 5-7 4" fill="none" stroke="#d0d0d0" strokeWidth="2" /><circle cx="21" cy="3" r="6" fill="#f00f0f" /></> },
  { name: "Settings", run: true, svg: <><circle cx="12" cy="12" r="9" fill="#8f979f" /><circle cx="12" cy="12" r="10" fill="none" stroke="#8f979f" strokeWidth="4" strokeDasharray="4.600 3.250" /><circle cx="12" cy="12" r="5.500" fill="#cfe6f5" /><circle cx="12" cy="12" r="4.200" fill="#1d5f8f" /></> },
];

export default function App() {
  return (
    <Page>
      <Global />
      <TitleBar>
        <Tab $active $w={200}>
          <Pair front="gb" back="us" size={15} /><Strong>GBPUSD</Strong><Down>▼</Down><span>1.31738</span><Fade>−0.13% / U</Fade>
          <button aria-label="Close tab"><X size={12} /></button>
        </Tab>
        <Tab $w={200}>
          <Gold size={14} /><Strong>XAUUSD</Strong><Down>▼</Down><span>4,085.825</span><Fade>−2.06%</Fade>
          <button aria-label="Close tab"><X size={12} /></button>
        </Tab>
        <NewTab aria-label="New tab"><Plus size={14} /></NewTab>
        <Spacer />
        <WindowButtons>
          <button className="dim" aria-label="Layout"><Icon name="layout" size={24} /></button>
          <button className="dim" aria-label="More"><Icon name="dots" size={20} w={1.5} /></button>
          <button aria-label="Minimise"><Minus size={12} strokeWidth={1.5} /></button>
          <button aria-label="Restore"><Copy size={11} strokeWidth={2} /></button>
          <button aria-label="Close"><X size={14} strokeWidth={1.5} /></button>
        </WindowButtons>
      </TitleBar>

      <Toolbar>
        <Avatar aria-label="Account">
          <svg width="25" height="25" viewBox="0 0 24 24"><circle cx="12" cy="12" r="12" fill="#6a7a6c" /><path d="M2 6q6-6 12-5l-2 9-8 10Q-2 12 2 6z" fill="#b9c2b6" /><path d="M10 4q5 1 4 7l3 10-6 3-3-8z" fill="#1f2622" /><path d="M15 12h7q0 7-6 9z" fill="#e2ded6" /></svg>
          <Badge>11</Badge>
        </Avatar>
        <SymbolSearch $w={78}><Search size={13} />GBPUSD</SymbolSearch>
        <Slot $w={36} aria-label="Compare"><CirclePlus size={17} strokeWidth={1.3} /></Slot>
        <Divider />
        {intervals.map(([label, w]) => <Slot key={label} $w={w}>{label}</Slot>)}
        <Slot $w={19} $on>4h</Slot>
        <Slot $w={19}>D</Slot>
        <Slot $w={20}>W</Slot>
        <Slot $w={19} aria-label="Intervals"><ChevronDown size={12} strokeWidth={1.5} /></Slot>
        <Divider />
        <Slot $w={34} aria-label="Line"><Icon name="lineChart" size={20} /></Slot>
        <Slot $w={28} $on aria-label="Candles"><Icon name="candles" size={20} /></Slot>
        <Slot $w={23} aria-label="Chart types"><ChevronDown size={12} strokeWidth={1.5} /></Slot>
        <Divider />
        <Slot $w={92}><Icon name="indicators" size={18} />Indicators</Slot>
        <Slot $w={19} aria-label="Favourites"><ChevronDown size={12} strokeWidth={1.5} /></Slot>
        <Slot $w={31} aria-label="Templates"><Icon name="grid" size={20} w={1.4} /></Slot>
        <Divider />
        <Slot $w={62}><Icon name="alarm" size={20} />Alert</Slot>
        <Slot $w={78}><Icon name="replay" size={17} />Replay</Slot>
        <Divider />
        <Slot $w={30} aria-label="Undo"><Icon name="undo" size={16} w={1.5} /></Slot>
        <Slot $w={34} $dim aria-label="Redo"><Icon name="redo" size={16} w={1.5} /></Slot>
        <Spacer />
        <Slot $w={28} aria-label="Layout"><svg width="17" height="15" viewBox="0 0 17 15" fill="none" stroke="currentColor"><rect x=".5" y=".5" width="16" height="14" rx="1.500" /></svg></Slot>
        <Named>Unnamed<small>Save</small></Named>
        <Slot $w={17} aria-label="Layouts"><ChevronDown size={12} strokeWidth={1.5} /></Slot>
        <Divider />
        <Slot $w={33} aria-label="Quick search"><Icon name="quick" size={18} w={1.4} /></Slot>
        <Slot $w={31} aria-label="Settings"><Icon name="hex" size={21} /></Slot>
        <Slot $w={31} aria-label="Fullscreen"><Maximize size={17} strokeWidth={1.4} /></Slot>
        <Slot $w={35} aria-label="Snapshot"><Camera size={20} strokeWidth={1.2} /></Slot>
        <Publish>Publish</Publish>
      </Toolbar>

      <Body>
        <LeftRail>
          <RailTool $on aria-label="Cross"><Icon name="cross" /></RailTool>
          {leftTools.map((n) => <RailTool key={n} aria-label={n}><Icon name={n} /></RailTool>)}
          <RailTool aria-label="Icons"><Smile size={21} strokeWidth={1.2} /></RailTool>
          <hr />
          <RailTool aria-label="Measure"><Ruler size={21} strokeWidth={1.2} /></RailTool>
          <RailTool aria-label="Zoom in"><ZoomIn size={18} strokeWidth={1.3} /></RailTool>
          <hr />
          <RailTool aria-label="Magnet"><Icon name="magnet" size={20} /></RailTool>
          <RailTool aria-label="Lock drawing mode"><Icon name="pencilLock" /></RailTool>
          <RailTool aria-label="Lock"><Icon name="lock" size={20} /></RailTool>
          <RailTool aria-label="Hide"><Icon name="eye" /></RailTool>
          <hr />
          <RailTool aria-label="Remove"><Icon name="trash" size={21} /></RailTool>
          <RailTool $light aria-label="Favourites"><Star size={18} strokeWidth={1.4} /></RailTool>
        </LeftRail>

        <Centre>
          <ChartCard>
            <PlotRow>
              <Plot>
                <Chart />
                <Legend>
                  <Pair front="gb" back="us" size={16} ring="#fff" />
                  <LegendTitle>British Pound / U.S. Dollar · 4h · OANDA</LegendTitle>
                  <Pill><i>–</i><i>≈</i></Pill>
                  <Ohlc>
                    <span>O<b>1.31959</b></span><span>H<b>1.31988</b></span><span>L<b>1.31356</b></span><span>C<b>1.31469</b></span><b>−0.00447</b><b>(−0.34%)</b>
                  </Ohlc>
                </Legend>
                <Study>EMA 50 close<b>1.31505</b></Study>
                <Collapse aria-label="Collapse legend"><ChevronUp size={10} /></Collapse>
                <Floating>
                  <Grip />
                  {floatingTools.map((n) => <button key={n} aria-label={n} className={n === "cross" ? "on" : ""}><Icon name={n} /></button>)}
                </Floating>
                <NavButtons>
                  <button aria-label="Zoom out"><Minus size={13} /></button>
                  <button aria-label="Zoom in"><Plus size={13} /></button>
                  <button aria-label="Back"><ChevronLeft size={13} /></button>
                  <button aria-label="Forward"><ChevronRight size={13} /></button>
                  <button aria-label="Reset"><RotateCcw size={12} /></button>
                </NavButtons>
                <Brand href="#"><TvMark width={25} color="#111" />TradingView</Brand>
              </Plot>
              <PriceAxis>
                <svg aria-label="Price scale">
                  {prices.map((p, i) => <text key={p} x="24" y={65 + Math.round(i * 52.35)} fontSize="10" textAnchor="middle" fill="#333">{p}</text>)}
                </svg>
                <Currency>USD<ChevronDown size={9} /></Currency>
                <LastPrice><span>GBPUSD</span><span>1.31738</span></LastPrice>
                <CursorPrice><CirclePlus size={15} strokeWidth={1.5} />1.30907</CursorPrice>
              </PriceAxis>
            </PlotRow>
            <TimeRow>
              <TimeScale>
                <svg aria-label="Time scale">
                  {dates.map(([x, d]) => <text key={d} x={x} y="14" fontSize="10" textAnchor="middle" fontWeight={d === "Nov" ? 600 : 400} fill="#222">{d}</text>)}
                </svg>
                <CursorTime>{"Thu 13 Nov '25   22:00"}</CursorTime>
              </TimeScale>
              <TimeSettings aria-label="Time settings"><Icon name="hex" size={14} w={1.6} /></TimeSettings>
            </TimeRow>
          </ChartCard>
          <RangeBar>
            {ranges.map(([label, w]) => <Range key={label} $w={w}>{label}</Range>)}
            <Divider />
            <Range $w={32} aria-label="Go to date"><Icon name="goto" size={19} /></Range>
            <Spacer />
            <span>10:52:19 UTC</span>
          </RangeBar>
          <DockBar>
            <DockTab>Pine Editor</DockTab><DockTab>Trading Panel</DockTab><Spacer />
            <DockButton aria-label="Expand"><ChevronUp size={20} strokeWidth={1.2} /></DockButton>
            <DockButton aria-label="Maximise"><Icon name="expand" size={17} w={1.5} /></DockButton>
          </DockBar>
        </Centre>

        <Side>
          <Watch>
            <SideHead>
              <Slot $w={48}>FOR...<ChevronDown size={11} strokeWidth={1.5} /></Slot>
              <Slot $w={44} aria-label="Add symbol"><Plus size={18} strokeWidth={1.2} /></Slot>
              <Slot $w={18} aria-label="Table view"><Icon name="table" size={20} /></Slot>
              <Slot $w={46} aria-label="More"><Icon name="dots" size={19} w={1.8} /></Slot>
            </SideHead>
            <Table>
              <colgroup><col width="45" /><col width="33" /><col width="30" /><col /></colgroup>
              <thead>
                <tr>
                  <th>
                    <SymHead>
                      <svg width="9" height="11" viewBox="0 0 9 11"><path d="M0 0h9L6 5.500 9 11H0z" fill="#4a4a4a" /></svg>
                      <Clip $w={19}>Syn</Clip>
                    </SymHead>
                  </th>
                  <th><Clip $w={18} $x={11}>Las</Clip></th><th><Clip $w={14} $x={12}>Ch</Clip></th><th>Chg%</th>
                </tr>
              </thead>
              <tbody>
                <tr><GroupCell colSpan={4}><ChevronDown size={10} strokeWidth={1.5} />IMPORTAND</GroupCell></tr>
                {watch.map((r) => (
                  <Row key={r.last} $on={r.on}>
                    <td><Sym>{r.icon}</Sym></td>
                    <td><Last $w={29} $x={1} $tick={r.tick}>{r.last}</Last></td>
                    <td><Clip $w={24} $x={2}><Move $up={r.up}>{r.ch}</Move></Clip></td>
                    <td><Move $up={r.up}>{r.pct}</Move></td>
                  </Row>
                ))}
              </tbody>
            </Table>
          </Watch>
          <Details>
            <DetailHead>
              <Pair front="gb" back="us" size={21} /><b>G.</b>
              <button aria-label="Grid"><Icon name="grid" size={22} w={1.3} /></button>
              <button aria-label="Note"><SquarePen size={18} strokeWidth={1.3} /></button>
              <button aria-label="More"><Icon name="dots" size={19} w={1.8} /></button>
            </DetailHead>
            <Line>British Pound / U.S. Dollar <ExternalLink size={12} strokeWidth={1.3} /></Line>
            <Line>• OANDA</Line>
            <Line $dim>Forex</Line>
            <Price>1.3173<sup>8</sup><small>USD</small></Price>
            <Change><span>−0.00178</span><span>−0.13%</span></Change>
            <Line $dim $h={18}><Minus size={10} strokeWidth={6} />Market closed</Line>
            <Line $dim $h={15}>Last update at Nov 14,</Line>
            <Line $dim $h={15}>23:59 GMT+2</Line>
            <News href="#"><Zap size={10} color="#8b5cf6" /><span>2 days ago · Dollar<br />rises against euro...</span><ChevronRight size={12} /></News>
          </Details>
        </Side>

        <IconRail>
          <SideHandle aria-label="Toggle panel"><ChevronRight size={8} /></SideHandle>
          <RailButton $on aria-label="Watchlist"><Icon name="bookmark" /></RailButton>
          <RailButton aria-label="Alerts"><Icon name="clock" /><Badge>15</Badge></RailButton>
          <RailButton aria-label="Object tree"><Layers2 size={21} strokeWidth={1.2} /></RailButton>
          <RailButton aria-label="Chats"><MessagesSquare size={22} strokeWidth={1.2} /></RailButton>
          <Spacer />
          <RailButton aria-label="Screener"><Icon name="radar" size={25} /></RailButton>
          <RailButton aria-label="Calendar"><Calendar size={22} strokeWidth={1.2} /></RailButton>
          <RailButton aria-label="News"><Rss size={22} strokeWidth={1.2} /></RailButton>
          <RailButton aria-label="Notifications"><Bell size={22} strokeWidth={1.2} /></RailButton>
          <AppsButton aria-label="Products">
            <svg width="16" height="16" viewBox="0 0 16 16" fill="currentColor"><path d="M1 1h3v3H1zM6.500 1h3v3h-3zM12 1h3v3h-3zM1 6.500h3v3H1zM6.500 6.500h3v3h-3zM12 6.500h3v3h-3zM1 12h3v3H1zM6.500 12h3v3h-3zM12 12h3v3h-3z" /></svg>
          </AppsButton>
          <hr />
          <RailButton aria-label="Help"><CircleHelp size={26} strokeWidth={1.1} /></RailButton>
        </IconRail>
      </Body>

      <Taskbar>
        <Weather>
          <svg width="21" height="20" viewBox="0 0 21 20"><circle cx="9.500" cy="9" r="8.500" fill="#f0a030" /><path d="M10 17q-3-.5-2-3 1-2 3-1.500Q12 9 15 10q2.500 1 2.500 3 2.500 0 2.500 2t-2.500 2z" fill="#d5ddf5" /></svg>
          <span>22°C<small>Mostly sunny</small></span>
        </Weather>
        <button aria-label="Start">
          <svg width="21" height="21" viewBox="0 0 21 21" fill="#4cc3f2"><path d="M0 0h10v10H0zM11 0h10v10H11zM0 11h10v10H0zM11 11h10v10H11z" /></svg>
        </button>
        <SearchBox><Search size={14} /><input placeholder="Search" aria-label="Search" /></SearchBox>
        <Apps>
          {art.map((a) => (
            <AppButton key={a.name} $run={a.run} $on={a.on} aria-label={a.name}>
              <svg width="20" height="20" viewBox="0 0 24 24" overflow="visible">{a.svg}</svg>
            </AppButton>
          ))}
        </Apps>
        <Tray>
          <TraySlot $w={26} aria-label="Hidden icons"><ChevronUp size={13} /></TraySlot>
          <TraySlot $w={27} aria-label="OneDrive"><Cloud size={14} fill="#dcdcdc" color="#dcdcdc" /></TraySlot>
          <TraySlot $w={28} aria-label="Microphone and location">
            <Mic size={12} color="#7fc4cc" /><svg width="10" height="10" viewBox="0 0 10 10" fill="none" stroke="#9cc7d8"><path d="M9 1 1 5l4 1 1 3z" /></svg>
          </TraySlot>
          <TraySlot $w={36}>ENG</TraySlot>
          <TraySlot $w={64} aria-label="Network, volume and battery"><Monitor size={15} strokeWidth={1.6} /><Volume2 size={15} strokeWidth={1.6} /><BatteryCharging size={16} /></TraySlot>
          <Clock>12:52 PM<br />11/16/2025</Clock>
        </Tray>
      </Taskbar>
    </Page>
  );
}
